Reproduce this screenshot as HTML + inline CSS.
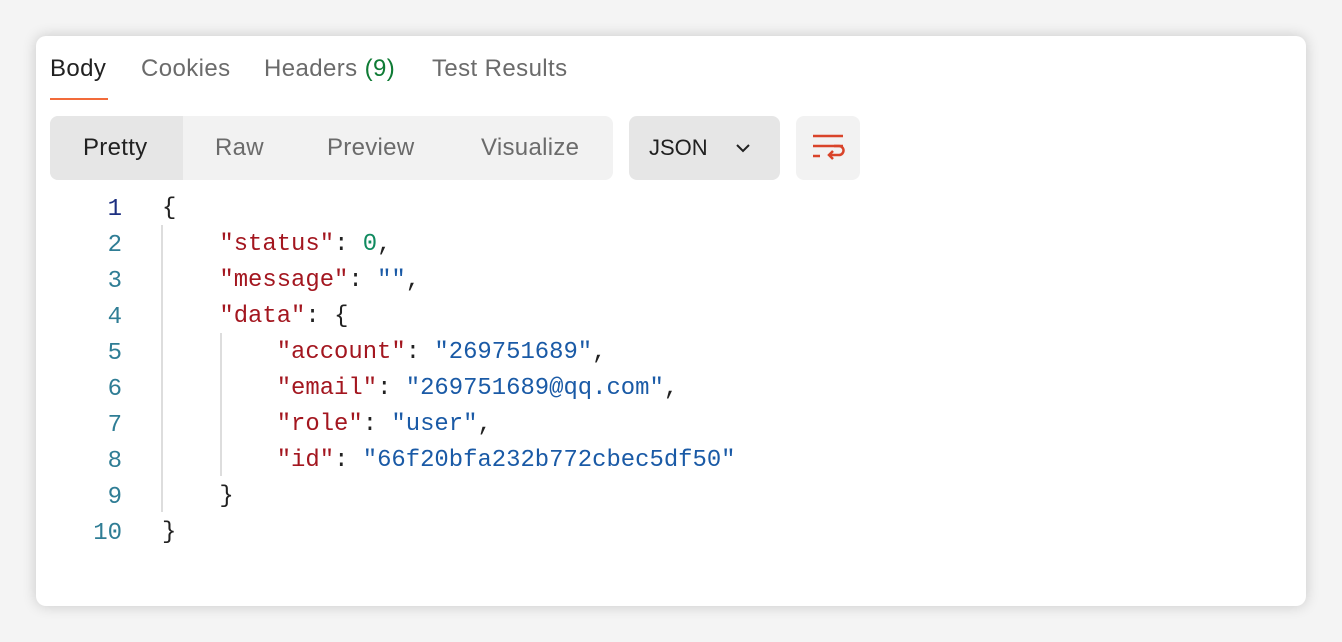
<!DOCTYPE html>
<html><head><style>
body{margin:0;width:1342px;height:642px;background:#f4f4f4;font-family:"Liberation Sans",sans-serif;position:relative;overflow:hidden}
.card{position:absolute;left:36px;top:36px;width:1270px;height:570px;background:#fff;border-radius:10px;box-shadow:0 0 14px rgba(0,0,0,.18)}
.tab{position:absolute;top:55px;font-size:24px;letter-spacing:0.4px;color:#6b6b6b}
.seg{position:absolute;left:50px;top:116px;width:563px;height:64px;background:#f2f2f2;border-radius:8px}
.seg span{position:absolute;top:18px;font-size:24px;letter-spacing:0.3px;color:#6b6b6b}
.code{position:absolute;font-family:"Liberation Mono",monospace;font-size:23.9px;color:#212121;white-space:pre}
.ln{position:absolute;width:90px;left:32px;text-align:right;font-family:"Liberation Mono",monospace;font-size:24px;color:#2f7d95}
.k{color:#a3161f}.s{color:#1a5aa6}.n{color:#0f8a5f}
</style></head><body>
<div class="card"></div>
<div class="tab" style="left:50px;color:#212121">Body</div>
<div style="position:absolute;left:50px;top:98px;width:58px;height:2px;background:#f26b3a"></div>
<div class="tab" style="left:141px">Cookies</div>
<div class="tab" style="left:264px">Headers <span style="color:#0f7b35">(9)</span></div>
<div class="tab" style="left:432px">Test Results</div>
<div class="seg"><div style="position:absolute;left:0;top:0;width:133px;height:64px;background:#e6e6e6;border-radius:8px 0 0 8px"></div>
<span style="left:33px;color:#212121">Pretty</span><span style="left:165px">Raw</span><span style="left:277px">Preview</span><span style="left:431px">Visualize</span></div>
<div style="position:absolute;left:629px;top:116px;width:151px;height:64px;background:#e6e6e6;border-radius:8px"><span style="position:absolute;left:20px;top:19px;font-size:22px;color:#212121">JSON</span>
<svg style="position:absolute;left:106px;top:26px" width="16" height="12"><path d="M2 3l6 6 6-6" stroke="#212121" stroke-width="2" fill="none"/></svg></div>
<div style="position:absolute;left:796px;top:116px;width:64px;height:64px;background:#f2f2f2;border-radius:8px">
<svg style="position:absolute;left:16px;top:18px" width="34" height="30"><g stroke="#d9442a" stroke-width="2.5" fill="none"><path d="M1 2H31M1 12H31M1 22H8"/><path d="M22 12h5a4.5 4.5 0 0 1 0 9h-9"/><path d="M21 17l-4 4 4 4"/></g></svg></div>
<div style="position:absolute;left:161px;top:225px;width:2px;height:287px;background:#ddd"></div>
<div style="position:absolute;left:220px;top:333px;width:2px;height:143px;background:#ddd"></div>
<div style="position:absolute;left:0;top:196px">
<div class="ln" style="top:0;color:#1c2f80">1</div><div class="ln" style="top:36px">2</div><div class="ln" style="top:72px">3</div><div class="ln" style="top:108px">4</div><div class="ln" style="top:144px">5</div><div class="ln" style="top:180px">6</div><div class="ln" style="top:216px">7</div><div class="ln" style="top:252px">8</div><div class="ln" style="top:288px">9</div><div class="ln" style="top:324px">10</div></div>
<div class="code" style="left:162px;top:191px;line-height:36px">{
    <span class="k">"status"</span>: <span class="n">0</span>,
    <span class="k">"message"</span>: <span class="s">""</span>,
    <span class="k">"data"</span>: {
        <span class="k">"account"</span>: <span class="s">"269751689"</span>,
        <span class="k">"email"</span>: <span class="s">"269751689@qq.com"</span>,
        <span class="k">"role"</span>: <span class="s">"user"</span>,
        <span class="k">"id"</span>: <span class="s">"66f20bfa232b772cbec5df50"</span>
    }
}</div>
</body></html>
